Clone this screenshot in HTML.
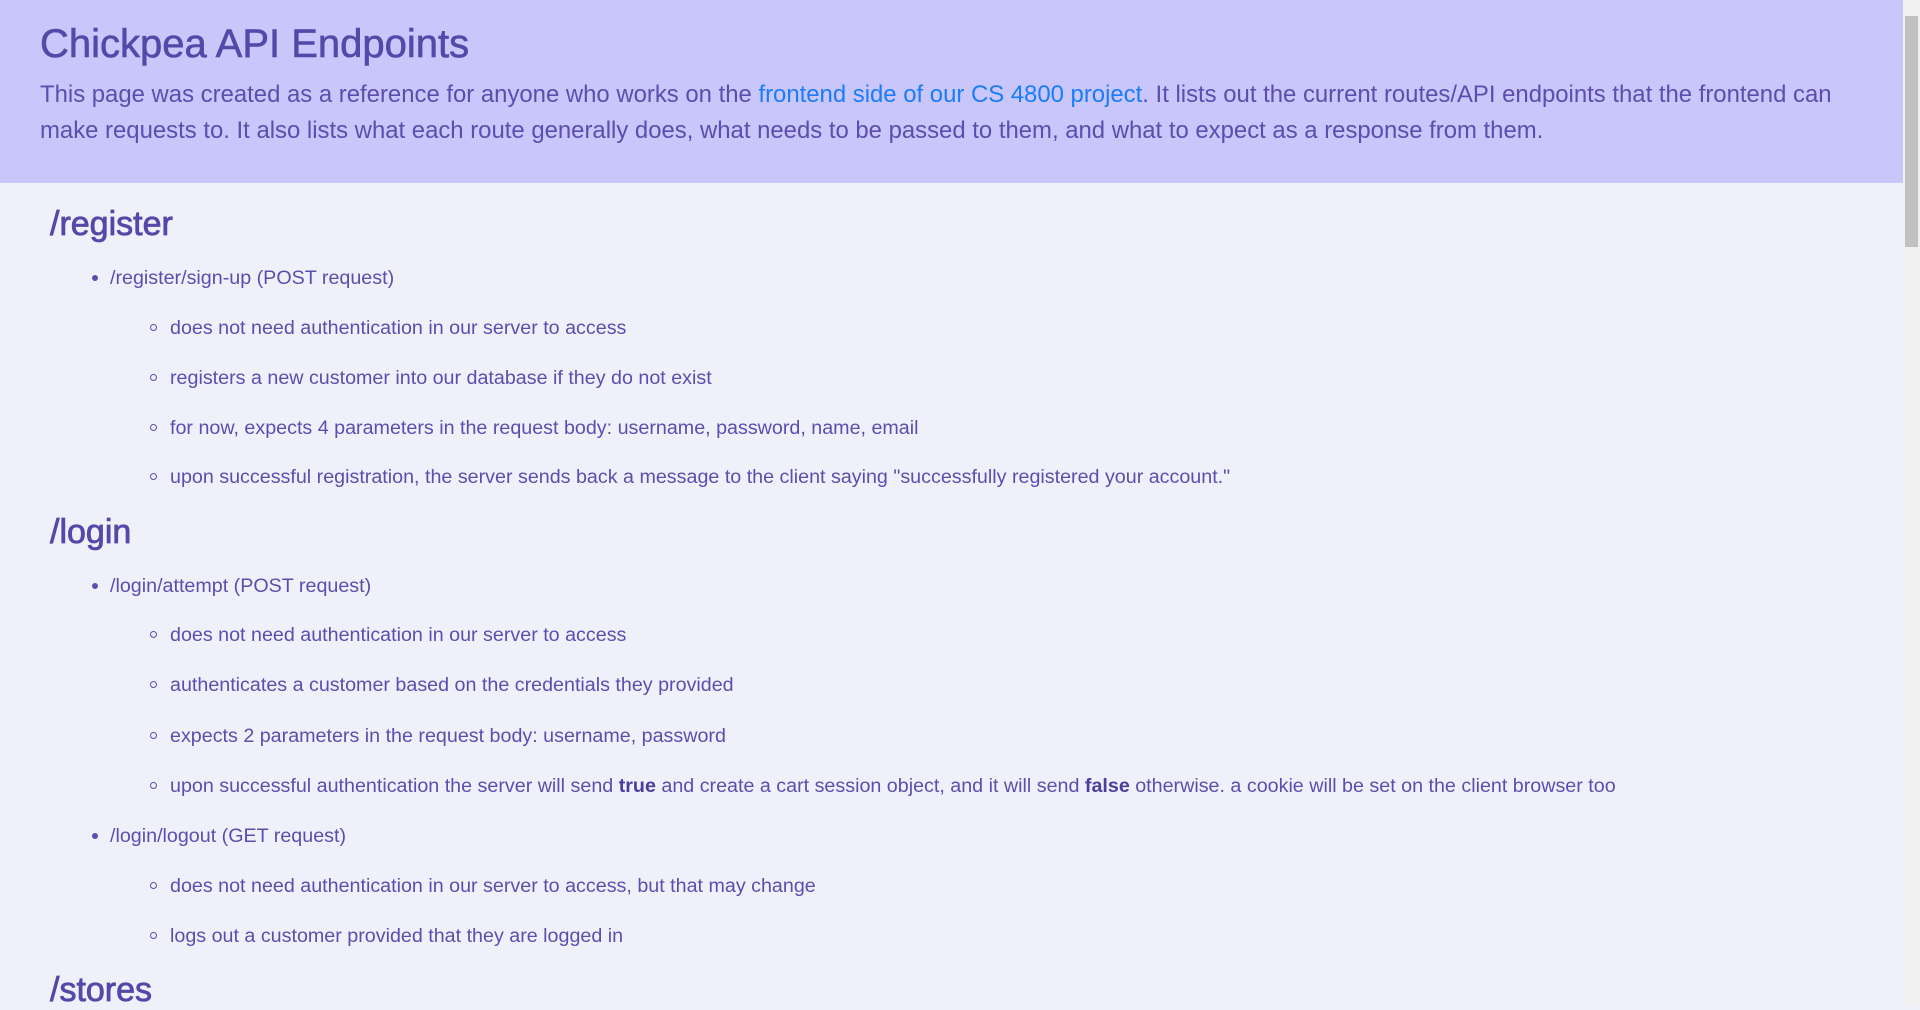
<!DOCTYPE html>
<html><head><meta charset="utf-8"><style>
html,body{margin:0;padding:0;width:1920px;height:1006px;overflow:hidden;background:#f0f0fa;font-family:"Liberation Sans",sans-serif;color:#5a4fae;}
.hdr{position:absolute;left:0;top:0;width:1903px;height:183px;background:#c8c6fa;}
.l{position:absolute;white-space:nowrap;}
.t{font-size:40px;color:#5349a8;left:40px;top:22px;line-height:44px;-webkit-text-stroke:0.6px #5349a8}
.p{font-size:23.9px;left:40px;line-height:36px;}
.p a{color:#1a7cff;text-decoration:none}
.h{font-size:34px;color:#5349a8;left:50px;line-height:40px;-webkit-text-stroke:0.8px #5349a8}
.a{font-size:19.7px;left:110px;line-height:26px;}
.b{font-size:19.7px;left:170px;line-height:26px;}
.a:before{content:"";position:absolute;left:-18px;top:10px;width:6px;height:6px;border-radius:50%;background:#5a4fae}
.b:before{content:"";position:absolute;left:-20px;top:9px;width:5px;height:5px;border-radius:50%;border:1.3px solid #5a4fae}
b{color:#4a3f9e}
.sb{position:absolute;left:1903px;top:0;width:17px;height:1006px;background:#f0f0f0}
.th{position:absolute;left:1905px;top:16px;width:13px;height:231px;background:#c1c1c1}
</style></head><body>
<div class="hdr"></div>
<div class="l t">Chickpea API Endpoints</div>
<div class="l p" style="top:77px">This page was created as a reference for anyone who works on the <a>frontend side of our CS 4800 project</a>. It lists out the current routes/API endpoints that the frontend can</div>
<div class="l p" style="top:113px">make requests to. It also lists what each route generally does, what needs to be passed to them, and what to expect as a response from them.</div>

<div class="l h" style="top:204px">/register</div>
<div class="l a" style="top:265px">/register/sign-up (POST request)</div>
<div class="l b" style="top:315px">does not need authentication in our server to access</div>
<div class="l b" style="top:365px">registers a new customer into our database if they do not exist</div>
<div class="l b" style="top:415px">for now, expects 4 parameters in the request body: username, password, name, email</div>
<div class="l b" style="top:464px">upon successful registration, the server sends back a message to the client saying "successfully registered your account."</div>

<div class="l h" style="top:512px">/login</div>
<div class="l a" style="top:573px">/login/attempt (POST request)</div>
<div class="l b" style="top:622px">does not need authentication in our server to access</div>
<div class="l b" style="top:672px">authenticates a customer based on the credentials they provided</div>
<div class="l b" style="top:723px">expects 2 parameters in the request body: username, password</div>
<div class="l b" style="top:773px">upon successful authentication the server will send <b>true</b> and create a cart session object, and it will send <b>false</b> otherwise. a cookie will be set on the client browser too</div>
<div class="l a" style="top:823px">/login/logout (GET request)</div>
<div class="l b" style="top:873px">does not need authentication in our server to access, but that may change</div>
<div class="l b" style="top:923px">logs out a customer provided that they are logged in</div>

<div class="l h" style="top:970px">/stores</div>
<div class="sb"></div><div class="th"></div>
</body></html>
